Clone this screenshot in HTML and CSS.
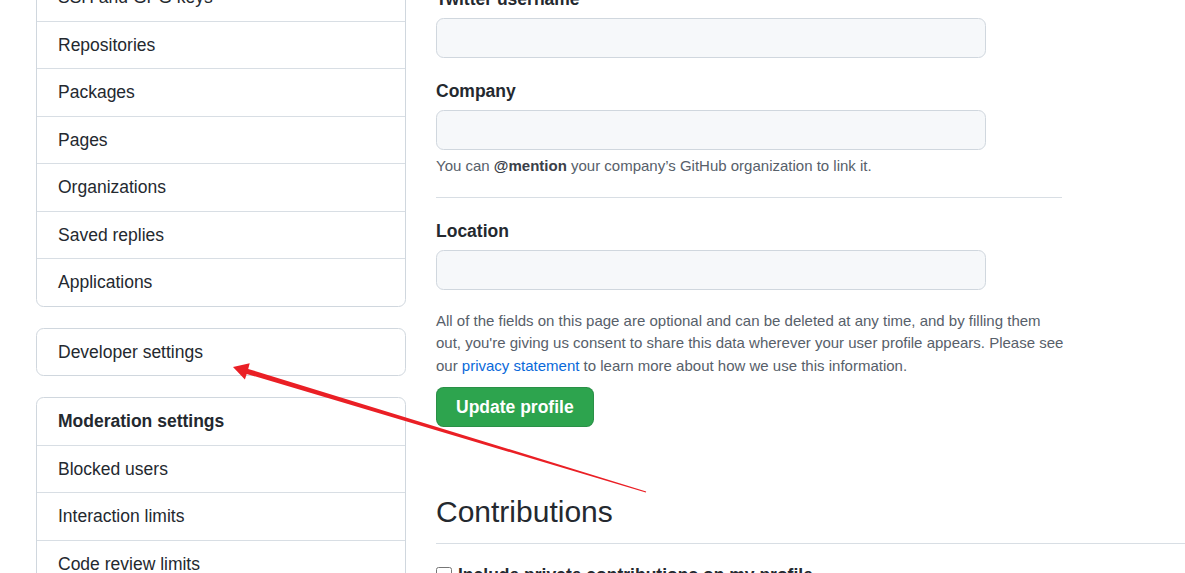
FILE: index.html
```html
<!DOCTYPE html>
<html lang="en">
<head>
<meta charset="utf-8">
<title>Settings</title>
<link rel="stylesheet" href="styles.css">
</head>
<body>
<div class="layout">
  <aside class="sidebar">
    <nav class="menu">
      <a class="menu-item">SSH and GPG keys</a>
      <a class="menu-item">Repositories</a>
      <a class="menu-item">Packages</a>
      <a class="menu-item">Pages</a>
      <a class="menu-item">Organizations</a>
      <a class="menu-item">Saved replies</a>
      <a class="menu-item">Applications</a>
    </nav>
    <nav class="menu">
      <a class="menu-item">Developer settings</a>
    </nav>
    <nav class="menu">
      <div class="menu-heading">Moderation settings</div>
      <a class="menu-item">Blocked users</a>
      <a class="menu-item">Interaction limits</a>
      <a class="menu-item">Code review limits</a>
    </nav>
  </aside>
  <main class="main">
    <form class="profile-form">
      <div class="form-group">
        <label class="form-label">Twitter username</label>
        <input class="form-input" type="text">
      </div>
      <div class="form-group">
        <label class="form-label">Company</label>
        <input class="form-input" type="text">
        <p class="note">You can <strong>@mention</strong> your company’s GitHub organization to link it.</p>
      </div>
      <hr class="divider">
      <div class="form-group">
        <label class="form-label">Location</label>
        <input class="form-input" type="text">
      </div>
      <p class="note notice">All of the fields on this page are optional and can be deleted at any time, and by filling them out, you're giving us consent to share this data wherever your user profile appears. Please see our <a class="link">privacy statement</a> to learn more about how we use this information.</p>
      <button class="btn-primary" type="button">Update profile</button>
    </form>
    <section class="contributions">
      <h2 class="section-title">Contributions</h2>
      <label class="check-row"><input type="checkbox" class="check"> <span>Include private contributions on my profile</span></label>
    </section>
  </main>
</div>
<svg class="annotation" width="1185" height="573" viewBox="0 0 1185 573">
  <polygon points="233,367 249.7,363.2 248.2,368.9 646.2,491.4 645.8,492.6 246.7,373.9 244.9,379.6" fill="#ea1f25"/>
</svg>
</body>
</html>
```

FILE: styles.css
```css
* { box-sizing: border-box; }
html, body { margin: 0; padding: 0; background: #ffffff; }
body {
  font-family: "Liberation Sans", Arial, sans-serif;
  color: #24292f;
  overflow: hidden;
  width: 1185px;
  height: 573px;
  position: relative;
}
.layout {
  display: flex;
  align-items: flex-start;
  gap: 30px;
  padding-left: 36px;
  margin-top: -27px;
}
.sidebar {
  width: 370px;
  flex: none;
  display: flex;
  flex-direction: column;
  gap: 21px;
}
.menu {
  border: 1px solid #d0d7de;
  border-radius: 7.5px;
  overflow: hidden;
  background: #fff;
}
.menu-item, .menu-heading {
  display: block;
  padding: 10px 20px 10px 21px;
  font-size: 17.5px;
  line-height: 26.5px;
  color: #24292f;
  border-top: 1px solid #d8dee4;
}
.menu > :first-child { border-top: 0; }
.menu-heading { font-weight: 700; }

.main { flex: 1; min-width: 0; padding-top: 15px; }
.profile-form { width: 626px; }
.form-group { margin-bottom: 22px; }
.form-label {
  display: block;
  font-size: 17.5px;
  line-height: 22px;
  font-weight: 700;
  margin-bottom: 8px;
}
.form-input {
  display: block;
  width: 550px;
  height: 40px;
  border: 1px solid #d0d7de;
  border-radius: 7.5px;
  background: #f6f8fa;
}
.note {
  margin: 5px 0 0;
  font-size: 15px;
  line-height: 22.5px;
  color: #57606a;
}
.note strong { color: #3a4048; }
.divider {
  border: 0;
  border-top: 1px solid #d8dee4;
  margin: -3px 0 22px;
}
.notice { margin: -2px 0 10px; width: 630px; }
.link { color: #0969da; }
.btn-primary {
  display: block;
  height: 40px;
  padding: 0 19px;
  border: 1px solid rgba(27,31,36,0.15);
  border-radius: 7.5px;
  background: #2da44e;
  color: #fff;
  font-family: inherit;
  font-size: 17.5px;
  font-weight: 700;
}
.contributions { margin-top: 66px; }
.section-title {
  margin: 0;
  font-size: 30px;
  line-height: 37.5px;
  font-weight: 400;
  padding-bottom: 12px;
  border-bottom: 1px solid #d8dee4;
}
.check-row {
  display: flex;
  align-items: center;
  gap: 6px;
  margin-top: 20px;
  font-size: 17.5px;
  font-weight: 700;
  line-height: 22px;
}
.check { margin: 0; width: 16px; height: 16px; }
.annotation {
  position: absolute;
  left: 0;
  top: 0;
  pointer-events: none;
}
```
